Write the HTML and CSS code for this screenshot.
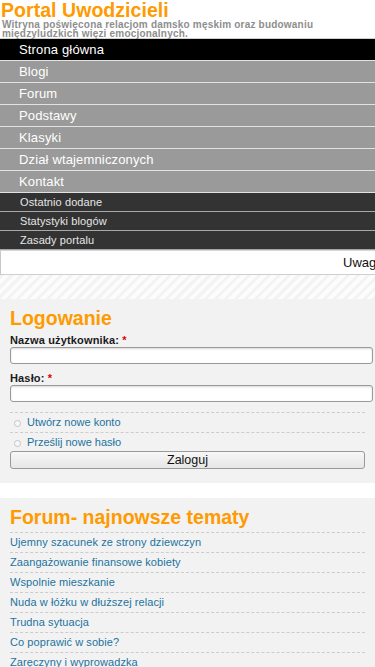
FILE: index.html
```html
<!DOCTYPE html>
<html lang="pl">
<head>
<meta charset="utf-8">
<meta name="viewport" content="width=device-width, initial-scale=1">
<title>Portal Uwodzicieli</title>
<link rel="stylesheet" href="styles.css">
</head>
<body>
<header class="site-header">
  <h1 class="site-name">Portal Uwodzicieli</h1>
  <p class="site-slogan">Witryna poświęcona relacjom damsko męskim oraz budowaniu międzyludzkich więzi emocjonalnych.</p>
</header>

<nav class="main-menu">
  <ul>
    <li class="active"><a href="#">Strona główna</a></li>
    <li><a href="#">Blogi</a></li>
    <li><a href="#">Forum</a></li>
    <li><a href="#">Podstawy</a></li>
    <li><a href="#">Klasyki</a></li>
    <li><a href="#">Dział wtajemniczonych</a></li>
    <li><a href="#">Kontakt</a></li>
  </ul>
  <ul class="sub-menu">
    <li><a href="#">Ostatnio dodane</a></li>
    <li><a href="#">Statystyki blogów</a></li>
    <li><a href="#">Zasady portalu</a></li>
  </ul>
</nav>

<div class="notice"><span class="notice-text">Uwaga</span></div>
<div class="stripes"></div>

<section class="block login">
  <h2 class="block-title">Logowanie</h2>
  <div class="field">
    <label class="field-label">Nazwa użytkownika: <span class="req">*</span></label>
    <input class="field-input" type="text">
  </div>
  <div class="field">
    <label class="field-label">Hasło: <span class="req">*</span></label>
    <input class="field-input" type="password">
  </div>
  <ul class="login-links">
    <li><a href="#">Utwórz nowe konto</a></li>
    <li><a href="#">Prześlij nowe hasło</a></li>
  </ul>
  <button class="submit" type="button">Zaloguj</button>
</section>

<section class="block forum">
  <h2 class="block-title">Forum- najnowsze tematy</h2>
  <ul class="topics">
    <li><a href="#">Ujemny szacunek ze strony dziewczyn</a></li>
    <li><a href="#">Zaangażowanie finansowe kobiety</a></li>
    <li><a href="#">Wspolnie mieszkanie</a></li>
    <li><a href="#">Nuda w łóżku w dłuższej relacji</a></li>
    <li><a href="#">Trudna sytuacja</a></li>
    <li><a href="#">Co poprawić w sobie?</a></li>
    <li><a href="#">Zaręczyny i wyprowadzka</a></li>
    <li><a href="#">Jak ją odzyskać?</a></li>
  </ul>
</section>
</body>
</html>
```

FILE: styles.css
```css
* { box-sizing: border-box; }

html, body {
  margin: 0;
  padding: 0;
  background: #fff;
  font-family: "Liberation Sans", Arial, sans-serif;
  color: #222;
  overflow-x: hidden;
}

a { text-decoration: none; }

.site-name {
  margin: 0;
  padding-left: 1px;
  font-size: 19.5px;
  line-height: 20px;
  font-weight: bold;
  letter-spacing: 0.05px;
  color: #ff9a00;
}

.site-slogan {
  margin: 0;
  padding-left: 2px;
  font-size: 10px;
  line-height: 9px;
  font-weight: bold;
  letter-spacing: 0.2px;
  color: #8e8e8e;
}

.main-menu {
  border-top: 1px solid #cfcfcf;
}

.main-menu ul {
  list-style: none;
  margin: 0;
  padding: 0;
}

.main-menu li {
  background: #9a9a9a;
  border-bottom: 1px solid #e2e2e2;
}

.main-menu li a {
  display: block;
  height: 21px;
  line-height: 21px;
  padding-left: 19px;
  font-size: 13px;
  letter-spacing: 0.15px;
  color: #fff;
}

.main-menu li.active {
  background: #000;
}

.main-menu .sub-menu li {
  background: #333;
  border-bottom: 1px solid #a8a8a8;
}

.main-menu .sub-menu li a {
  height: 18px;
  line-height: 18px;
  padding-left: 20px;
  font-size: 11px;
  letter-spacing: 0.1px;
  color: #e6e6e6;
}

.notice {
  height: 25px;
  background: #fff;
  border-top: 1px solid #d6d6d6;
  border-left: 1px solid #c8c8c8;
  border-bottom: 1px solid #cfcfcf;
  box-shadow: 0 1px 2px rgba(0, 0, 0, 0.12);
  overflow: hidden;
  white-space: nowrap;
  padding-left: 342px;
  line-height: 23px;
  font-size: 13px;
  color: #111;
}

.stripes {
  height: 24px;
  background: repeating-linear-gradient(135deg, #f3f3f3 0 3px, #fcfcfc 3px 7px);
}

.block {
  background: #f2f2f2;
  padding: 8px 10px 14px;
}

.block-title {
  margin: 0 0 6px;
  font-size: 19.5px;
  line-height: 22px;
  font-weight: bold;
  color: #ff9a00;
}

.field + .field {
  margin-top: 9px;
}

.field-label {
  display: block;
  font-size: 11px;
  line-height: 11px;
  font-weight: bold;
  letter-spacing: 0.15px;
  color: #1a1a1a;
}

.req {
  color: #e00000;
}

.field-input {
  display: block;
  width: 363px;
  height: 17px;
  margin: 1px 0 0;
  border: 1px solid #9a9a9a;
  border-radius: 3px;
  background: #fff;
  box-shadow: inset 0 1px 2px rgba(0, 0, 0, 0.15);
}

.login-links {
  list-style: none;
  margin: 10px 0 0;
  padding: 0;
  width: 355px;
}

.login-links li {
  position: relative;
  border-top: 1px dashed #cccccc;
  height: 20px;
  line-height: 19px;
  padding-left: 17px;
  font-size: 11px;
}

.login-links li::before {
  content: "";
  position: absolute;
  left: 4px;
  top: 7px;
  width: 5px;
  height: 5px;
  border: 1px solid #c4c4c4;
  border-radius: 50%;
  background: #f8f8f8;
}

.login-links li:last-child {
  height: 19px;
}

.login-links a,
.topics a {
  color: #22729f;
}

.submit {
  display: block;
  width: 355px;
  height: 18px;
  margin: 0;
  padding: 0;
  border: 1px solid #999;
  border-radius: 3px;
  background: linear-gradient(#f7f7f7, #e6e6e6);
  font-family: "Liberation Sans", Arial, sans-serif;
  font-size: 12.5px;
  line-height: 16px;
  color: #111;
}

.forum {
  margin-top: 15px;
  padding-bottom: 10px;
}

.forum .block-title {
  margin-bottom: 4px;
}

.topics {
  list-style: none;
  margin: 0;
  padding: 0;
  width: 355px;
}

.topics li {
  border-top: 1px dashed #cccccc;
  height: 20px;
  line-height: 19px;
  font-size: 11px;
  letter-spacing: 0.08px;
}
```
